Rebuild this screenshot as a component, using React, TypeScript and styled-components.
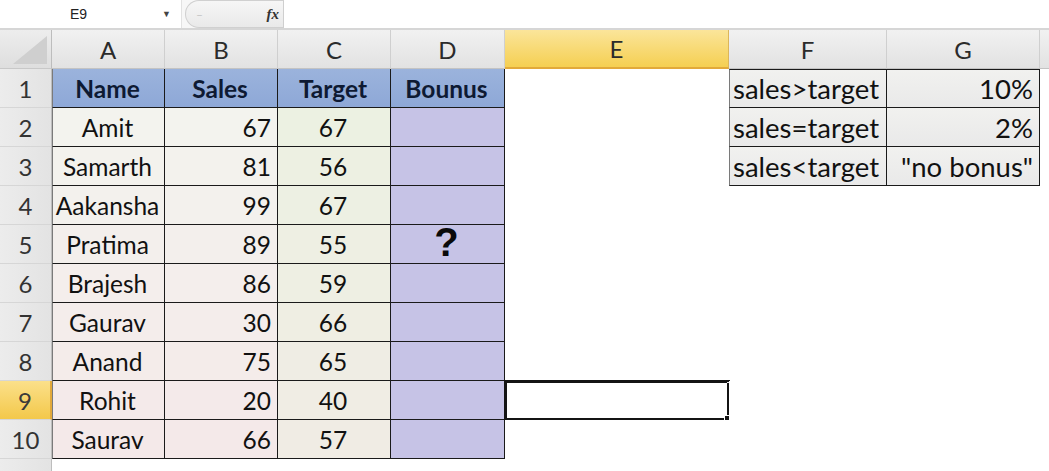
import React from 'react';
import styled, { createGlobalStyle, css } from 'styled-components';

const Global = createGlobalStyle`
  html, body { margin: 0; padding: 0; background: #ffffff; overflow: hidden; }
  body { font-family: Lato, "Liberation Sans", sans-serif; }
`;

const Page = styled.div`
  width: 1049px;
  height: 471px;
  overflow: hidden;
  background: #ffffff;
`;

const FormulaBar = styled.div`
  display: flex;
  height: 28px;
  border-bottom: 2px solid #d6d6d6;
  background: #f7f7f7;
`;

const NameBox = styled.div`
  width: 182px;
  display: flex;
  align-items: center;
  background: #ffffff;
  border-right: 1px solid #e2e2e2;
  font-family: "Liberation Sans", Arial, sans-serif;
  font-size: 14px;
  color: #222;
  padding-left: 70px;
  padding-right: 10px;
  box-sizing: border-box;
  justify-content: space-between;
`;

const Arrow = styled.span`
  font-size: 9px;
  color: #444;
`;

const FxArea = styled.div`
  width: 98px;
  margin-left: 3px;
  display: flex;
  align-items: center;
  justify-content: space-between;
  padding: 0 4px 0 10px;
  box-sizing: border-box;
  background: linear-gradient(#f6f6f6, #e9e9e9);
  border: 1px solid #d0d0d0;
  border-right: none;
  border-radius: 14px 0 0 14px;
`;

const Dash = styled.span`
  color: #c4c4c4;
  font-size: 12px;
`;

const Fx = styled.span`
  font-family: "Liberation Serif", serif;
  font-style: italic;
  font-weight: bold;
  font-size: 15px;
  color: #333;
`;

const FormulaInput = styled.div`
  flex: 1;
  background: #ffffff;
  border-left: 1px solid #cfcfcf;
`;

const Sheet = styled.div`
  display: grid;
  grid-template-columns: 52px 113px 113px 113px 114px 224px 158px 153px 1fr;
  grid-auto-rows: 39px;
`;

const Corner = styled.div`
  background: linear-gradient(#ededed, #dedede);
  border-right: 1px solid #bdbdbd;
  border-bottom: 1px solid #c8c8c8;
  display: flex;
  align-items: flex-end;
  justify-content: flex-end;
  padding: 0 4px 4px 0;
  box-sizing: border-box;
`;

const ColHeader = styled.div<{ $selected?: boolean }>`
  display: flex;
  align-items: center;
  justify-content: center;
  font-family: Lato, "Liberation Sans", sans-serif;
  font-size: 24px;
  color: #2b2b2b;
  box-sizing: border-box;
  border-right: 1px solid #cfcfcf;
  border-bottom: 1px solid #c3c3c3;
  background: linear-gradient(#f1f1f1, #e2e2e2);
  ${(p) =>
    p.$selected &&
    css`
      background: linear-gradient(#fbe59a, #f5cf52);
      border-bottom: 2px solid #e2a93a;
      border-right: 1px solid #dcb65a;
    `}
`;

const RowHeader = styled.div<{ $selected?: boolean }>`
  display: flex;
  align-items: center;
  justify-content: center;
  font-family: Lato, "Liberation Sans", sans-serif;
  font-size: 24px;
  color: #333;
  box-sizing: border-box;
  border-right: 1px solid #bdbdbd;
  border-bottom: 1px solid #d6d6d6;
  background: linear-gradient(90deg, #ececec, #e3e3e3);
  ${(p) =>
    p.$selected &&
    css`
      background: linear-gradient(#fbe08a, #f3c84a);
      border-right: 2px solid #e2a93a;
      color: #3a3a3a;
    `}
`;

type Kind = 'blank' | 'head' | 'data' | 'bonus' | 'rule';

const kindStyles: Record<Kind, ReturnType<typeof css>> = {
  blank: css`
    background: #ffffff;
  `,
  head: css`
    background: linear-gradient(#9bb3dc, #8ea8d7);
    font-weight: 700;
    color: #0e1a33;
    border-right: 1px solid #1a1a1a;
    border-bottom: 1px solid #1a1a1a;
  `,
  data: css`
    color: #111;
    border-right: 1px solid #1a1a1a;
    border-bottom: 1px solid #1a1a1a;
  `,
  bonus: css`
    background: #c6c3e6;
    border-right: 1px solid #1a1a1a;
    border-bottom: 1px solid #1a1a1a;
  `,
  rule: css`
    background: linear-gradient(#f1f1ef, #e9e9e9);
    color: #111;
    font-size: 27.5px;
    padding: 0 6px 0 3px;
    border-right: 1px solid #1a1a1a;
    border-bottom: 1px solid #1a1a1a;
  `,
};

const Cell = styled.div<{
  $kind: Kind;
  $align?: 'left' | 'center' | 'right';
  $top?: boolean;
  $left?: boolean;
}>`
  position: relative;
  display: flex;
  align-items: center;
  justify-content: ${(p) =>
    p.$align === 'left' ? 'flex-start' : p.$align === 'right' ? 'flex-end' : 'center'};
  padding: 0 6px 0 4px;
  box-sizing: border-box;
  font-family: Lato, "Liberation Sans", sans-serif;
  font-size: 24.5px;
  white-space: nowrap;
  overflow: visible;
  ${(p) => kindStyles[p.$kind]}
  ${(p) => p.$top && css`border-top: 1px solid #1a1a1a;`}
  ${(p) => p.$left && css`border-left: 1px solid #7a7a7a;`}
`;

const Question = styled.span`
  font-family: "Liberation Sans", Arial, sans-serif;
  font-weight: 900;
  font-size: 40px;
  color: #0a0a0a;
  margin-top: -4px;
`;

const Selection = styled.div`
  position: absolute;
  left: -1px;
  top: -1px;
  right: -1px;
  bottom: -1px;
  border: 3px solid #141414;
  pointer-events: none;
`;

const FillHandle = styled.div`
  position: absolute;
  right: -5px;
  bottom: -5px;
  width: 6px;
  height: 6px;
  background: #141414;
  border: 1px solid #ffffff;
`;

const FaintLine = styled.div`
  position: absolute;
  left: 100%;
  top: -1px;
  width: 156px;
  height: 1px;
  background: #ececf0;
`;

const names = ['Amit', 'Samarth', 'Aakansha', 'Pratima', 'Brajesh', 'Gaurav', 'Anand', 'Rohit', 'Saurav'];
const sales = [67, 81, 99, 89, 86, 30, 75, 20, 66];
const targets = [67, 56, 67, 55, 59, 66, 65, 40, 57];
const rules: [string, string][] = [
  ['sales>target', '10%'],
  ['sales=target', '2%'],
  ['sales<target', '"no bonus"'],
];

const letters = ['A', 'B', 'C', 'D', 'E', 'F', 'G', ''];

function mix(a: number[], b: number[], t: number) {
  return `rgb(${a.map((v, i) => Math.round(v + (b[i] - v) * t)).join(',')})`;
}

function dataBg(rowIdx: number, col: number) {
  const t = rowIdx / 8;
  const top = col === 2 ? [236, 241, 226] : [243, 243, 238];
  const bottom = col === 2 ? [240, 236, 228] : [244, 233, 233];
  return mix(top, bottom, t);
}

export default function App() {
  const rows: React.ReactNode[] = [];

  for (let r = 1; r <= 11; r++) {
    const cells: React.ReactNode[] = [];
    cells.push(
      <RowHeader key={`h${r}`} $selected={r === 9}>
        {r}
      </RowHeader>
    );
    if (r === 1) {
      ['Name', 'Sales', 'Target', 'Bounus'].forEach((t, i) =>
        cells.push(
          <Cell key={`c${r}-${i}`} $kind="head" $left={i === 0}>
            {t}
          </Cell>
        )
      );
    } else if (r <= 10) {
      const i = r - 2;
      cells.push(
        <Cell key={`a${r}`} $kind="data" $left style={{ background: dataBg(i, 0) }}>
          {names[i]}
        </Cell>
      );
      cells.push(
        <Cell key={`b${r}`} $kind="data" $align="right" style={{ background: dataBg(i, 1) }}>
          {sales[i]}
        </Cell>
      );
      cells.push(
        <Cell key={`c${r}`} $kind="data" style={{ background: dataBg(i, 2) }}>
          {targets[i]}
        </Cell>
      );
      cells.push(
        <Cell key={`d${r}`} $kind="bonus">
          {r === 5 ? <Question>?</Question> : null}
        </Cell>
      );
    } else {
      for (let k = 0; k < 4; k++) cells.push(<Cell key={`x${r}-${k}`} $kind="blank" />);
    }
    cells.push(
      <Cell key={`e${r}`} $kind="blank">
        {r === 9 ? (
          <Selection>
            <FillHandle />
            <FaintLine />
          </Selection>
        ) : null}
      </Cell>
    );
    if (r <= 3) {
      const [f, g] = rules[r - 1];
      cells.push(
        <Cell key={`f${r}`} $kind="rule" $align="left" $left $top={r === 1}>
          {f}
        </Cell>
      );
      cells.push(
        <Cell key={`g${r}`} $kind="rule" $align="right" $top={r === 1}>
          {g}
        </Cell>
      );
    } else {
      cells.push(<Cell key={`f${r}`} $kind="blank" />);
      cells.push(<Cell key={`g${r}`} $kind="blank" />);
    }
    cells.push(<Cell key={`h-${r}`} $kind="blank" />);
    rows.push(...cells);
  }

  return (
    <Page>
      <Global />
      <FormulaBar>
        <NameBox>
          <span>E9</span>
          <Arrow>▼</Arrow>
        </NameBox>
        <FxArea>
          <Dash>–</Dash>
          <Fx>fx</Fx>
        </FxArea>
        <FormulaInput />
      </FormulaBar>
      <Sheet>
        <Corner>
          <svg width="34" height="28" viewBox="0 0 34 28">
            <polygon points="34,0 34,28 0,28" fill="#cfcfcf" />
          </svg>
        </Corner>
        {letters.map((l, i) => (
          <ColHeader key={`col${i}`} $selected={l === 'E'}>
            {l}
          </ColHeader>
        ))}
        {rows}
      </Sheet>
    </Page>
  );
}
